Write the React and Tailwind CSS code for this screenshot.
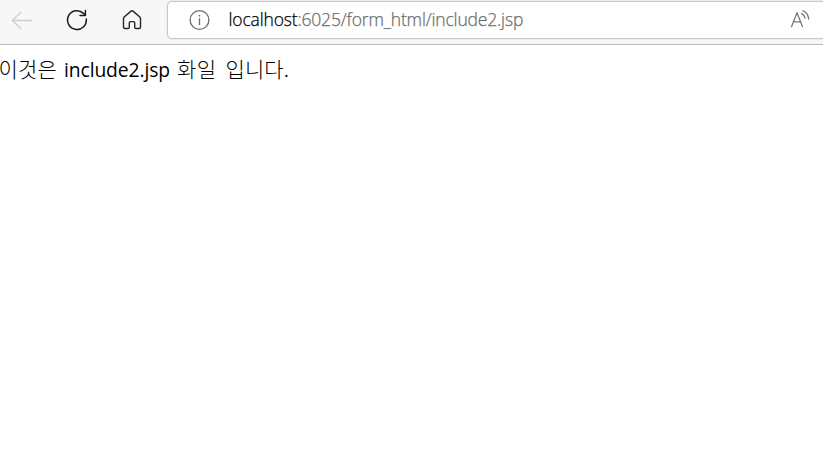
function BackIcon() {
  return (
    <svg className="block h-5 w-[22px]" viewBox="0 0 22 20" fill="none" stroke="#cdcdcd" strokeWidth="1.3" strokeLinecap="round" strokeLinejoin="round">
      <path d="M20.5 9.5H1.2M10 1.2L1.2 9.5L10 17.8" />
    </svg>
  );
}

function ReloadIcon() {
  return (
    <svg className="block h-[22px] w-[22px]" viewBox="0 0 22 22" fill="none" stroke="#1b1b1b" strokeWidth="1.5" strokeLinecap="round" strokeLinejoin="round">
      <path d="M20.3 10A9.4 9.4 0 1 1 17.6 4.4L19.3 6.3" />
      <path d="M19.4 1.4V6.5H14" />
    </svg>
  );
}

function HomeIcon() {
  return (
    <svg className="block h-[22px] w-5" viewBox="0 0 20 22" fill="none" stroke="#262626" strokeWidth="1.4" strokeLinejoin="round">
      <path d="M9 2.1Q10 1.3 11 2.1L17.8 8Q18.5 8.7 18.5 9.6V18Q18.5 19.5 17 19.5H14Q12.7 19.5 12.7 18.2V13.8Q12.7 12.6 11.5 12.6H8.5Q7.3 12.6 7.3 13.8V18.2Q7.3 19.5 6 19.5H3Q1.5 19.5 1.5 18V9.6Q1.5 8.7 2.2 8Z" />
    </svg>
  );
}

function InfoIcon() {
  return (
    <svg className="block h-[22px] w-[22px]" viewBox="0 0 22 22" fill="none" stroke="#6b6b6b" strokeWidth="1.3">
      <circle cx="10.5" cy="11" r="9.4" />
      <path d="M10.5 9.2V16" />
      <circle cx="10.5" cy="6.7" r="0.9" fill="#6b6b6b" stroke="none" />
    </svg>
  );
}

function ReadAloudIcon() {
  return (
    <svg className="block h-5 w-[22px]" viewBox="0 0 22 20" fill="none" stroke="#777777" strokeWidth="1.3" strokeLinecap="round" strokeLinejoin="round">
      <path d="M1.5 16.7L7 2.7L12.5 16.7M3.4 11.8H10.6" />
      <path d="M11.5 3.6Q14.6 4.8 15 8.2" />
      <path d="M12.8 0.8Q18 2.5 18.7 9" />
    </svg>
  );
}

export default function App() {
  return (
    <div className="h-[457px] w-[823px] overflow-hidden bg-white font-['Open_Sans','Noto_Sans_CJK_KR',sans-serif]">
      <header className="flex h-[45px] items-start border-b border-[#b9b9b9] bg-[#f7f7f7]">
        <div className="flex w-[167px] shrink-0 pt-[9px] pl-[11px]">
          <button aria-label="Back" className="mt-[1px] w-[55px]"><BackIcon /></button>
          <button aria-label="Reload" className="w-[56px]"><ReloadIcon /></button>
          <button aria-label="Home"><HomeIcon /></button>
        </div>
        <div className="mt-px flex h-[38px] w-[680px] shrink-0 items-center rounded-[5px] border border-[#c8c8c8] bg-white pl-[21px] shadow-[0_0_0_1px_#ececec]">
          <InfoIcon />
          <div className="mt-[-2px] ml-[17.5px] w-[561.5px] text-[17.5px] leading-6 font-light tracking-[-0.16px] whitespace-nowrap text-[#6c6c6c] [-webkit-text-stroke:0.25px]">
            <span className="text-black">localhost</span>:6025/form_html/include2.jsp
          </div>
          <ReadAloudIcon />
        </div>
      </header>
      <main className="flex pt-[10px] text-[21px] leading-7 whitespace-nowrap text-black">
        <span className="-mt-px -ml-[1.5px] w-[65.5px] font-['Noto_Sans_CJK_KR',sans-serif] font-light tracking-[0.2px]">이것은</span>
        <span className="mt-px w-[113px] text-[19.3px] tracking-[-0.1px]">include2.jsp</span>
        <span className="-mt-px w-[48.5px] font-['Noto_Sans_CJK_KR',sans-serif] font-light tracking-[0.4px]">화일</span>
        <span className="-mt-px font-['Noto_Sans_CJK_KR',sans-serif] font-light tracking-[0.1px]">입니다.</span>
      </main>
    </div>
  );
}
